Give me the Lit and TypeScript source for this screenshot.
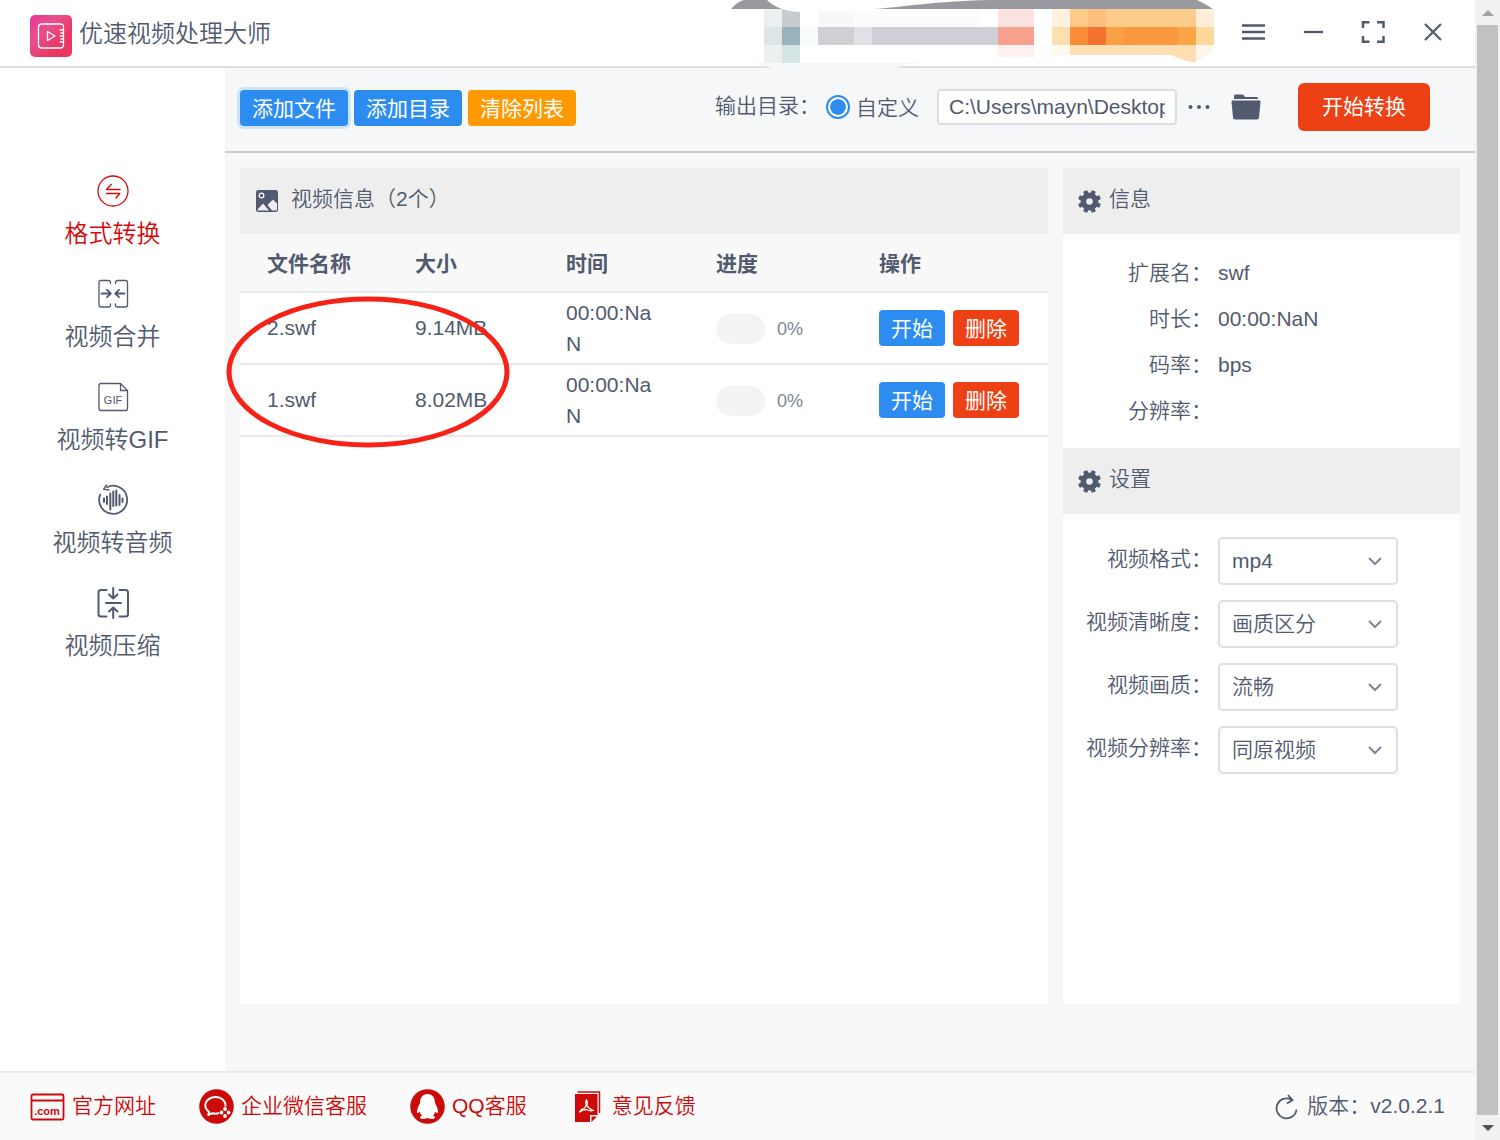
import { LitElement, html, css, svg } from "lit";
import { customElement, property, state } from "lit/decorators.js";
import { classMap } from "lit/directives/class-map.js";

const base = css`
  * { box-sizing: border-box; }
  :host {
    font-family: "Liberation Sans", "Noto Sans CJK SC", sans-serif;
    font-size: 21px;
    font-weight: 350;
    line-height: 31px;
    color: #515a6e;
  }
  svg { display: block; flex: none; }
  button, input, select { font: inherit; color: inherit; margin: 0; }
  button { border: 0; padding: 0; background: none; cursor: pointer; }
  a { color: inherit; text-decoration: none; }
  .btn {
    height: 36px;
    padding: 2px 12px 0;
    border-radius: 4px;
    color: #fff;
    background: #2d8cf0;
    white-space: nowrap;
    line-height: 34px;
    font-weight: 400;
  }
  .danger { background: #ed4014; }
  .warning { background: #ff9900; }
`;

const icons = {
  convert: svg`<circle cx="16" cy="16" r="15"/><path d="M14.300 9.500L9.500 14.500H23M9.500 18.500H22.800L19 23"/>`,
  merge: svg`<path d="M13.500 5.500V4.500Q13.500 2.500 11.500 2.500H4Q2 2.500 2 4.500V27Q2 29 4 29H11.500Q13.500 29 13.500 27V26M18.500 5.500V4.500Q18.500 2.500 20.500 2.500H28.500Q30.500 2.500 30.500 4.500V27Q30.500 29 28.500 29H20.500Q18.500 29 18.500 27V26"/><path stroke-width="1.800" d="M4.500 15.500H13.500M10 11.800L13.800 15.500L10 19.200M27.500 15.500H18.500M22 11.800L18.200 15.500L22 19.200"/>`,
  gif: svg`<path d="M22.500 2.500H4Q2 2.500 2 4.500V27.500Q2 29.500 4 29.500H28.500Q30.500 29.500 30.500 27.500V9.500L23.500 2.500V9.500H30.500"/><text x="16" y="22.500" text-anchor="middle" font-size="11" stroke="none" fill="currentColor">GIF</text>`,
  audio: svg`<path stroke-width="1.800" d="M10 3.200A14 14 0 1 1 3.200 10.500"/><path stroke-width="1.300" d="M9.500 1L6.500 5.200L12 6"/><path stroke-width="2" d="M7 14.500V18M10 12.500V20M13.300 9.500V25.500M16.300 7.500V22M19.300 6.500V21.500M22.500 11V21M25.500 14.500V18"/>`,
  compress: svg`<path stroke-width="2" d="M9.500 3H4Q1.500 3 1.500 5.500V27Q1.500 29.500 4 29.500H9.500M22.500 3H28.500Q31 3 31 5.500V27Q31 29.500 28.500 29.500H22.500M16.200 1V11M12 7.500L16.200 11.500L20.500 7.500M9 16H24M16.200 31V21M12 24.500L16.200 20.500L20.500 24.500"/>`,
};

const gear = svg`<g fill="currentColor"><circle cx="11.500" cy="11.500" r="9"/>${[22.5, 67.5, 112.5, 157.5].map((a) => svg`<rect x="9.300" y="0" width="4.400" height="23" rx="1" transform="rotate(${a} 11.5 11.5)"/>`)}</g><circle cx="11.500" cy="11.500" r="3.300" fill="#eee"/>`;

@customElement("title-bar")
class TitleBar extends LitElement {
  static styles = [base, css`
    :host {
      display: flex;
      position: relative;
      min-height: 68px;
      padding: 0 12px 0 30px;
      background: #fff;
      border-bottom: 2px solid #dcdee2;
    }
    .brand { display: flex; align-items: center; gap: 7px; flex: 1; padding-top: 5px; }
    .name { margin: 0; padding-bottom: 4px; font-size: 24px; line-height: 36px; font-weight: 350; }
    .controls { display: flex; }
    .control { width: 60px; height: 64px; display: grid; place-items: center; }
    .mosaic { position: absolute; top: 0; right: 255px; }
  `];

  render() {
    const cells: [number, number, number, number, string][] = [
      [44, 9, 18, 18, "#eceff0"], [62, 9, 18, 18, "#c8ccd1"], [98, 11, 36, 16, "#f8f8f8"], [134, 10, 126, 17, "#fcfcfc"],
      [278, 9, 36, 18, "#fce3df"], [332, 9, 18, 18, "#fff2e0"], [350, 9, 18, 18, "#fecb88"], [368, 9, 18, 18, "#fcc080"],
      [386, 9, 90, 18, "#fecc8a"], [476, 9, 18, 18, "#feedd8"],
      [44, 27, 18, 18, "#dde5e5"], [62, 27, 18, 18, "#9ab3ba"], [80, 27, 18, 18, "#fafbfb"], [98, 27, 36, 18, "#cfcfd4"],
      [134, 27, 18, 18, "#e0e0e6"], [152, 27, 126, 18, "#cfcfd5"], [278, 27, 36, 18, "#f8a18f"],
      [332, 27, 18, 18, "#fedfb0"], [350, 27, 18, 18, "#fa8c3a"], [368, 27, 18, 18, "#f5722e"], [386, 27, 18, 18, "#fca048"],
      [404, 27, 54, 18, "#fb973e"], [458, 27, 18, 18, "#fca447"], [476, 27, 18, 18, "#ffd799"],
      [44, 45, 18, 18, "#eaf1f0"], [62, 45, 18, 18, "#d5e4e4"], [278, 45, 36, 12, "#fdf0ef"], [332, 45, 18, 10, "#fff9ee"],
    ];
    return html`
      <div class="brand">
        <svg width="42" height="42" viewBox="0 0 42 42" aria-hidden="true">
          <defs><linearGradient id="g" x1="0" y1="0" x2="1" y2="1">
            <stop offset="0" stop-color="#e9379c"/><stop offset=".35" stop-color="#e8508b"/><stop offset=".7" stop-color="#ea3663"/><stop offset="1" stop-color="#ea3a62"/>
          </linearGradient></defs>
          <rect width="42" height="42" rx="5" fill="url(#g)"/>
          <g fill="none" stroke="#fff" stroke-width="1.300" stroke-linejoin="round" stroke-linecap="round">
            <path d="M33.500 14V12Q33.500 9 30.500 9H11.500Q8.500 9 8.500 12V30Q8.500 33 11.500 33H30.500Q33.500 33 33.500 30V28"/>
            <path d="M17.500 16.500V25.500L25 21ZM30 15H33.500M31 18H33.500M30 21H33.500M31 24H33.500M30 27H33.500M33.500 14V28"/>
          </g>
        </svg>
        <h1 class="name">优速视频处理大师</h1>
      </div>
      <svg class="mosaic" width="500" height="76" viewBox="0 0 500 76" aria-hidden="true">
        <path fill="#98999e" d="M11 9Q18 1 24 0H47Q53 6 62 9ZM155 9C190 6 220 1 270 0H477Q486 4 493 9Z"/>
        ${cells.map(([x, y, w, h, c]) => svg`<rect x=${x} y=${y} width=${w} height=${h} fill=${c} shape-rendering="crispEdges"/>`)}
        <path fill="#fff" d="M62 9Q72 12 80 12V9Z"/>
        <path fill="#fedfb4" d="M350 45H476V62Q464 62 456 57Q452 54 440 55H350Z"/>
        <path fill="#fef6ec" d="M476 45H494Q492 56 476 61Z"/>
        <path fill="#f7f8fa" d="M44 63H208Q180 65 172 69H54Q50 67 34 63Z"/>
      </svg>
      <div class="controls">
        <button class="control" aria-label="菜单"><svg width="24" height="24" fill="none" stroke="currentColor" stroke-width="2.300"><path d="M1 5.500H24M1 12H24M1 18.500H24"/></svg></button>
        <button class="control" aria-label="最小化"><svg width="24" height="24" fill="none" stroke="currentColor" stroke-width="2.300"><path d="M3 12H22"/></svg></button>
        <button class="control" aria-label="最大化"><svg width="24" height="24" fill="none" stroke="currentColor" stroke-width="2.500"><path d="M2 8V2.200H8.500M16 2.200H22.500V8M2 16V21.800H8.500M16 21.800H22.500V16"/></svg></button>
        <button class="control" aria-label="关闭"><svg width="24" height="24" fill="none" stroke="currentColor" stroke-width="2.200"><path d="M4 4L20 20M20 4L4 20"/></svg></button>
      </div>`;
  }
}

@customElement("side-nav")
class SideNav extends LitElement {
  @state() private active = "convert";
  static styles = [base, css`
    :host { display: block; background: #fff; }
    .list { display: flex; flex-direction: column; gap: 26px; padding-top: 107px; }
    .item { display: flex; flex-direction: column; align-items: center; gap: 9px; font-size: 24px; line-height: 36px; }
    .active { color: #d20a0a; }
  `];

  private items: [keyof typeof icons, string][] = [
    ["convert", "格式转换"], ["merge", "视频合并"], ["gif", "视频转GIF"], ["audio", "视频转音频"], ["compress", "视频压缩"],
  ];

  render() {
    return html`<nav class="list">${this.items.map(([id, label]) => html`
      <a href="#${id}" class=${classMap({ item: true, active: this.active === id })} @click=${() => (this.active = id)}>
        <svg width="32" height="32" viewBox="0 0 32 32" fill="none" stroke="currentColor" stroke-width="1.300" stroke-linecap="round" stroke-linejoin="round" overflow="visible" aria-hidden="true">${icons[id]}</svg>
        <span>${label}</span>
      </a>`)}</nav>`;
  }
}

@customElement("tool-bar")
class ToolBar extends LitElement {
  static styles = [base, css`
    :host {
      display: flex;
      align-items: center;
      justify-content: space-between;
      padding: 15px 45px 20px 15px;
      border-bottom: 2px solid #c8cbd0;
    }
    .group { display: flex; align-items: center; gap: 6px; }
    .files { padding-top: 2px; }
    .caption { padding-bottom: 4px; }
    .focused { box-shadow: 0 0 0 3px #cfe3f9; }
    .choice { display: flex; align-items: center; gap: 6px; }
    .radio {
      appearance: none;
      width: 24px;
      height: 24px;
      padding: 2px;
      border: 2px solid #2d8cf0;
      border-radius: 50%;
      background: #fff;
    }
    .radio:checked { background: #2d8cf0 content-box; box-shadow: inset 0 0 0 2px #fff; }
    .path {
      width: 240px;
      height: 36px;
      margin-left: 12px;
      padding: 0 10px;
      border: 2px solid #dcdee2;
      border-radius: 4px;
      background: #fff;
    }
    .more { margin: 0 14px 0 4px; }
    .start { height: 48px; margin-left: 31px; padding: 0 24px; line-height: 48px; border-radius: 6px; }
  `];

  render() {
    return html`
      <div class="group files">
        <button class="btn focused">添加文件</button>
        <button class="btn">添加目录</button>
        <button class="btn warning">清除列表</button>
      </div>
      <div class="group">
        <span class="caption">输出目录：</span>
        <label class="choice"><input class="radio" type="radio" name="output" checked>自定义</label>
        <input class="path" type="text" aria-label="输出目录" value="C:\\Users\\mayn\\Desktop">
        <button class="more" aria-label="浏览"><svg width="24" height="24" fill="currentColor"><circle cx="3.500" cy="12" r="2"/><circle cx="12" cy="12" r="2"/><circle cx="20.500" cy="12" r="2"/></svg></button>
        <button aria-label="打开目录"><svg width="30" height="26" viewBox="0 0 30 26" fill="currentColor"><path d="M3 5V2Q3 .5 4.500 .5H11Q12 .5 13 1.500L14 3H25.500Q27 3 27 4.500V5ZM1.500 6.500H28.500Q29.500 6.500 29.500 8L28 23.500Q27.800 25.500 26 25.500H4Q2.200 25.500 2 23.500L.5 8Q.5 6.500 1.500 6.500Z"/></svg></button>
        <button class="btn danger start">开始转换</button>
      </div>`;
  }
}

@customElement("video-list")
class VideoList extends LitElement {
  @property({ attribute: false }) videos = [
    { name: "2.swf", size: "9.14MB", time: "00:00:NaN", progress: 0 },
    { name: "1.swf", size: "8.02MB", time: "00:00:NaN", progress: 0 },
  ];
  static styles = [base, css`
    :host { display: block; position: relative; background: #fff; }
    .head { display: flex; align-items: center; gap: 12px; height: 66px; padding: 0 15px; background: #eee; }
    .title { margin: 0; padding-bottom: 6px; font: inherit; }
    .table { width: 100%; table-layout: fixed; border-collapse: separate; border-spacing: 0; }
    .name { width: 148px; }
    .size { width: 151px; }
    .time { width: 150px; }
    .state { width: 163px; }
    .ops { width: 196px; }
    th { height: 59px; padding: 2px 27px 0; background: #f8f8f9; text-align: left; font-weight: 700; border-bottom: 2px solid #e8eaec; }
    td { height: 72px; padding: 0 0 0 27px; border-bottom: 2px solid #e8eaec; word-break: break-all; }
    td.plain { padding-bottom: 2px; }
    td.clock { padding: 4px 27px; }
    .progress { display: flex; align-items: center; gap: 12px; padding-top: 2px; font-size: 18px; color: #808695; }
    .track { width: 49px; height: 30px; border-radius: 15px; background: #f3f3f3; overflow: hidden; }
    .fill { height: 100%; background: #2d8cf0; }
    .actions { display: flex; gap: 8px; }
    .mark { position: absolute; left: -14px; top: 128px; pointer-events: none; }
  `];

  render() {
    return html`
      <div class="head">
        <svg width="24" height="24" viewBox="0 0 24 24" aria-hidden="true"><rect x="1" y="1" width="22" height="22" rx="2.500" fill="currentColor"/><circle cx="6.500" cy="6.500" r="2.300" fill="none" stroke="#fff" stroke-width="1.300"/><path fill="#eee" d="M2.500 20.500L8 14.500L14 21.500H3.500Q2.500 21.500 2.500 20.500ZM12.500 16L18 10.500L22 14.500V20.500Q22 21.500 21 21.500H17Z"/></svg>
        <h2 class="title">视频信息（${this.videos.length}个）</h2>
      </div>
      <table class="table">
        <colgroup><col class="name"><col class="size"><col class="time"><col class="state"><col class="ops"></colgroup>
        <thead><tr><th>文件名称</th><th>大小</th><th>时间</th><th>进度</th><th>操作</th></tr></thead>
        <tbody>${this.videos.map((v) => html`<tr>
          <td class="plain">${v.name}</td>
          <td class="plain">${v.size}</td>
          <td class="clock">${v.time}</td>
          <td><div class="progress"><div class="track" role="progressbar" aria-label="进度" aria-valuenow=${v.progress}><div class="fill" style="width:${v.progress}%"></div></div>${v.progress}%</div></td>
          <td><div class="actions"><button class="btn">开始</button><button class="btn danger">删除</button></div></td>
        </tr>`)}</tbody>
      </table>
      <svg class="mark" width="284" height="152" aria-hidden="true"><ellipse cx="142" cy="76" rx="139" ry="73" fill="none" stroke="#f62217" stroke-width="5"/></svg>`;
  }
}

@customElement("detail-panel")
class DetailPanel extends LitElement {
  static styles = [base, css`
    :host { display: block; background: #fff; }
    .head { display: flex; align-items: center; gap: 8px; height: 66px; padding: 0 15px; background: #eee; }
    .title { margin: 0; padding-bottom: 6px; font: inherit; }
    .info { margin: 0; padding: 16px 0 14px; }
    .row { display: grid; grid-template-columns: 149px 1fr; column-gap: 6px; line-height: 46px; }
    .label { text-align: right; }
    .value { margin: 0; }
    .form { display: flex; flex-direction: column; gap: 15px; padding: 23px 0; }
    .field { display: grid; grid-template-columns: 149px 180px; column-gap: 6px; line-height: 44px; }
    .wrap { display: grid; align-items: center; }
    .select {
      grid-area: 1 / 1;
      appearance: none;
      height: 48px;
      padding: 0 36px 0 12px;
      border: 2px solid #dcdee2;
      border-radius: 5px;
      background: #fff;
    }
    .chevron { grid-area: 1 / 1; justify-self: end; margin-right: 16px; pointer-events: none; color: #808695; }
  `];

  private info = [["扩展名", "swf"], ["时长", "00:00:NaN"], ["码率", "bps"], ["分辨率", ""]];
  private fields = [["视频格式", "mp4"], ["视频清晰度", "画质区分"], ["视频画质", "流畅"], ["视频分辨率", "同原视频"]];

  private head(title: string) {
    return html`<div class="head"><svg width="23" height="23" viewBox="0 0 23 23" aria-hidden="true">${gear}</svg><h2 class="title">${title}</h2></div>`;
  }

  render() {
    return html`
      ${this.head("信息")}
      <dl class="info">${this.info.map(([k, v]) => html`<div class="row"><dt class="label">${k}：</dt><dd class="value">${v}</dd></div>`)}</dl>
      ${this.head("设置")}
      <form class="form">${this.fields.map(([k, v], i) => html`<div class="field">
        <label class="label" for="f${i}">${k}：</label>
        <div class="wrap">
          <select class="select" id="f${i}"><option>${v}</option></select>
          <svg class="chevron" width="14" height="10" fill="none" stroke="currentColor" stroke-width="2"><path d="M1 2L7 8L13 2"/></svg>
        </div>
      </div>`)}</form>`;
  }
}

@customElement("status-bar")
class StatusBar extends LitElement {
  static styles = [base, css`
    :host {
      display: flex;
      align-items: center;
      justify-content: space-between;
      min-height: 69px;
      padding: 0 30px;
      background: #fafafa;
      border-top: 2px solid #e8eaec;
    }
    .links { display: flex; gap: 43px; color: #cc0a0a; }
    .link { display: flex; align-items: center; gap: 7px; }
    .text { padding-bottom: 2px; }
    .version { display: flex; align-items: center; gap: 8px; }
    .com { font-weight: 700; font-size: 11px; }
  `];

  private links = [
    { label: "官方网址", icon: svg`<g fill="none" stroke="currentColor" stroke-width="1.800"><rect x="1.500" y="5.500" width="32" height="25" rx="1.500"/><path d="M1.500 11.500H33.500"/></g><text class="com" x="17" y="26" text-anchor="middle" fill="currentColor">.com</text>` },
    { label: "企业微信客服", icon: svg`<circle cx="17.500" cy="17.500" r="17.300" fill="currentColor"/><path fill="none" stroke="#fff" stroke-width="2" stroke-linejoin="round" d="M26.500 17.500Q27 13 23 10Q18.500 7 13 8.500Q6.500 11 6.300 16Q6.200 20 10 22.800L9.300 26L13.500 24.200Q17 25.200 20 24"/><g fill="#fff"><circle cx="26" cy="20" r="1.900"/><circle cx="22.500" cy="23.500" r="1.900"/><circle cx="29.500" cy="23.500" r="1.900"/><circle cx="26" cy="27" r="1.900"/></g><circle cx="26" cy="23.500" r="1.500" fill="currentColor"/>` },
    { label: "QQ客服", icon: svg`<circle cx="17.500" cy="17.500" r="17.300" fill="currentColor"/><path fill="#fff" d="M17.500 5C12.500 5 10 9 10 14Q7 19 7 23Q7.300 25.500 9.700 22.500Q10.200 25 12 26.500Q9.500 27.500 10 29Q12 31 17.500 29Q23 31 25 29Q25.500 27.500 23 26.500Q24.800 25 25.300 22.500Q27.700 25.500 28 23Q28 19 25 14C25 9 22.500 5 17.500 5Z"/>` },
    { label: "意见反馈", icon: svg`<path fill="none" stroke="currentColor" stroke-width="1.500" d="M7.500 3H29.500V24"/><path fill="currentColor" d="M5 5H27.500V26H20V33H5ZM21.500 27.500H27L21.500 33Z"/><path fill="none" stroke="#fff" stroke-width="1.300" stroke-linejoin="round" stroke-linecap="round" d="M16.500 11Q18 13 16.800 16.500Q18.500 19.500 23.500 21.500Q20 22.500 16.500 20.500Q13 20.500 9.500 23Q11 20 14.500 19Q16 17.500 16.200 16Q15 13 16.500 11"/>` },
  ];

  render() {
    return html`
      <nav class="links">${this.links.map((l) => html`<a class="link" href="#"><svg width="35" height="35" viewBox="0 0 35 35" aria-hidden="true">${l.icon}</svg><span class="text">${l.label}</span></a>`)}</nav>
      <button class="version"><svg width="24" height="26" viewBox="0 0 24 26" fill="none" stroke="currentColor" stroke-width="1.800" aria-hidden="true"><path d="M21.500 15.500A10 10 0 1 1 16.500 5.700M13 1L17.500 6L12 9.500"/></svg><span class="text">版本：v2.0.2.1</span></button>`;
  }
}

@customElement("app-root")
class AppRoot extends LitElement {
  static styles = [base, css`
    :host { display: flex; min-height: 100vh; background: #f5f7f9; }
    .window { flex: 1; min-width: 0; display: flex; flex-direction: column; }
    .body { flex: 1; display: grid; grid-template-columns: 225px minmax(0, 1fr); }
    .main { display: flex; flex-direction: column; }
    .panels { flex: 1; display: grid; grid-template-columns: minmax(0, 1fr) 397px; gap: 15px; padding: 15px 15px 67px; }
    .scroll { width: 25px; display: flex; flex-direction: column; align-items: center; background: #f1f1f1; }
    .arrow { display: grid; place-items: center; width: 25px; height: 25px; }
    .thumb { flex: 1; width: 21px; background: #c1c1c1; }
  `];

  render() {
    return html`
      <div class="window">
        <title-bar></title-bar>
        <div class="body">
          <side-nav></side-nav>
          <main class="main">
            <tool-bar></tool-bar>
            <div class="panels">
              <video-list></video-list>
              <detail-panel></detail-panel>
            </div>
          </main>
        </div>
        <status-bar></status-bar>
      </div>
      <div class="scroll" aria-hidden="true">
        <div class="arrow"><svg width="12" height="6"><path fill="#a3a3a3" d="M0 6L6 0L12 6Z"/></svg></div>
        <div class="thumb"></div>
        <div class="arrow"><svg width="12" height="6"><path fill="#505050" d="M0 0H12L6 6Z"/></svg></div>
      </div>`;
  }
}
